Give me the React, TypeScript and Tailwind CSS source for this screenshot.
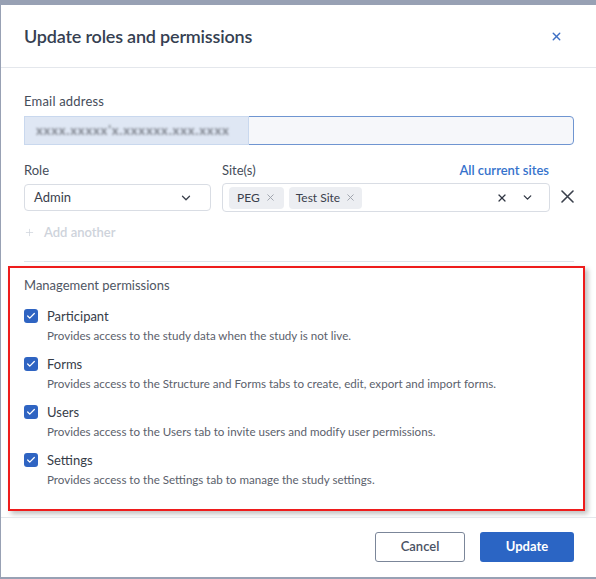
import { ChevronDown, X, Plus, Check } from 'lucide-react';

const permissions = [
  { name: 'Participant', desc: 'Provides access to the study data when the study is not live.' },
  { name: 'Forms', desc: 'Provides access to the Structure and Forms tabs to create, edit, export and import forms.' },
  { name: 'Users', desc: 'Provides access to the Users tab to invite users and modify user permissions.' },
  { name: 'Settings', desc: 'Provides access to the Settings tab to manage the study settings.' },
];

export default function App() {
  return (
    <div className="w-[596px] h-[579px] bg-[#98a1b4] pt-[5px] pb-[2px] overflow-hidden" style={{ fontFamily: 'Lato, "Open Sans", sans-serif' }}>
      <div className="h-full ml-[1px] bg-white flex flex-col text-[#3f4654]">
        <div className="h-[63px] shrink-0 pl-[23px] pr-[33px] flex items-center justify-between border-b border-[#e4e7ec]">
          <h1 className="text-[18px] font-semibold text-[#363f52] tracking-[-0.2px] pt-[1px]">Update roles and permissions</h1>
          <X className="w-[13px] h-[13px] text-[#3d6fc4]" strokeWidth={2.5} />
        </div>

        <div className="flex-1 pl-[23px] pr-[22px] pt-[25px]">
          <label className="block text-[13px] text-[#454c59] leading-4 tracking-[0.2px]">Email address</label>
          <div className="mt-[7px] h-[29px] rounded-sm border border-[#6f95d1] bg-[#f6f7fa] flex items-center relative">
            <div className="absolute left-[-1px] top-[-1px] h-[29px] w-[225px] bg-[#dfe7f4] border border-[#c9d8ee]" />
            <span className="relative ml-[11px] text-[13px] font-bold text-[#80858f] blur-[1.3px] select-none tracking-[0.8px]">xxxx.xxxxx&apos;x.xxxxxx.xxx.xxxx</span>
          </div>

          <div className="mt-[17px] flex items-start">
            <div className="w-[187px] shrink-0">
              <div className="text-[13px] text-[#454c59] leading-4">Role</div>
              <div className="mt-[6px] h-[27px] rounded-sm border border-[#d9dde4] flex items-center justify-between pl-[9px] pr-[17px] text-[13px] text-[#3a404c]">
                <span>Admin</span>
                <ChevronDown className="w-[14px] h-[14px] text-[#3a404c]" strokeWidth={2.2} />
              </div>
            </div>
            <div className="ml-[11px] w-[328px] shrink-0">
              <div className="flex justify-between leading-4">
                <span className="text-[13px] text-[#454c59]">Site(s)</span>
                <span className="text-[13px] font-semibold text-[#3572cc] mr-[1px]">All current sites</span>
              </div>
              <div className="mt-[5px] h-[29px] rounded-sm border border-[#d9dde4] flex items-center pl-[6px] pr-[15px]">
                <span className="h-[22px] px-[8px] bg-[#eceef2] rounded-sm flex items-center gap-[5px] text-[12px] text-[#3a404c]">
                  PEG <X className="w-[11px] h-[11px] text-[#9aa0aa]" strokeWidth={2} />
                </span>
                <span className="ml-[5px] h-[22px] pl-[7px] pr-[6px] bg-[#eceef2] rounded-sm flex items-center gap-[5px] text-[12px] text-[#3a404c]">
                  Test Site <X className="w-[11px] h-[11px] text-[#9aa0aa]" strokeWidth={2} />
                </span>
                <div className="ml-auto flex items-center gap-[13px]">
                  <X className="w-[12px] h-[12px] text-[#2f3542]" strokeWidth={2.4} />
                  <ChevronDown className="w-[13px] h-[13px] text-[#2f3542]" strokeWidth={2.4} />
                </div>
              </div>
            </div>
            <div className="flex-1 flex justify-end pt-[28px]">
              <svg width="13" height="13" viewBox="0 0 13 13" className="text-[#3a404c]">
                <path d="M1 1L12 12M12 1L1 12" stroke="currentColor" strokeWidth="1.6" strokeLinecap="round" />
              </svg>
            </div>
          </div>

          <div className="mt-[12px] flex items-center gap-[9px] text-[13px] font-semibold text-[#ced3db] leading-4">
            <Plus className="w-[11px] h-[11px]" strokeWidth={1.6} />
            <span>Add another</span>
          </div>

          <div className="mt-[21px] border-t border-[#dfe3ea]" />

          <div className="mt-[4px] -ml-[16px] mr-[-11px] border-[2px] border-[#ee1c1c] shadow-[3px_3px_5px_rgba(0,0,0,0.25)] pl-[14px] pt-[9px] pb-[21px]">
            <div className="text-[13px] text-[#4f5663] leading-4">Management permissions</div>
            <div className="mt-[15px] flex flex-col gap-[12px]">
              {permissions.map((p) => (
                <div key={p.name}>
                  <div className="flex items-center h-4">
                    <span className="w-[14px] h-[14px] rounded-[3px] bg-[#2f64c2] flex items-center justify-center">
                      <Check className="w-[10px] h-[10px] text-white" strokeWidth={3} />
                    </span>
                    <span className="ml-[9px] text-[13px] text-[#363c48] leading-4">{p.name}</span>
                  </div>
                  <div className="mt-[4px] ml-[23px] text-[11.6px] text-[#5b616c] leading-4">{p.desc}</div>
                </div>
              ))}
            </div>
          </div>
        </div>

        <div className="h-[60px] shrink-0 border-t border-[#e4e7ec] flex items-center justify-end gap-[15px] pr-[22px] pb-[2px]">
          <button className="w-[90px] h-[30px] rounded-[3px] border border-[#7b8699] text-[13px] font-semibold text-[#4a5264] bg-white">Cancel</button>
          <button className="w-[94px] h-[30px] rounded-[3px] bg-[#2b65c4] text-[13px] font-bold text-white">Update</button>
        </div>
      </div>
    </div>
  );
}
